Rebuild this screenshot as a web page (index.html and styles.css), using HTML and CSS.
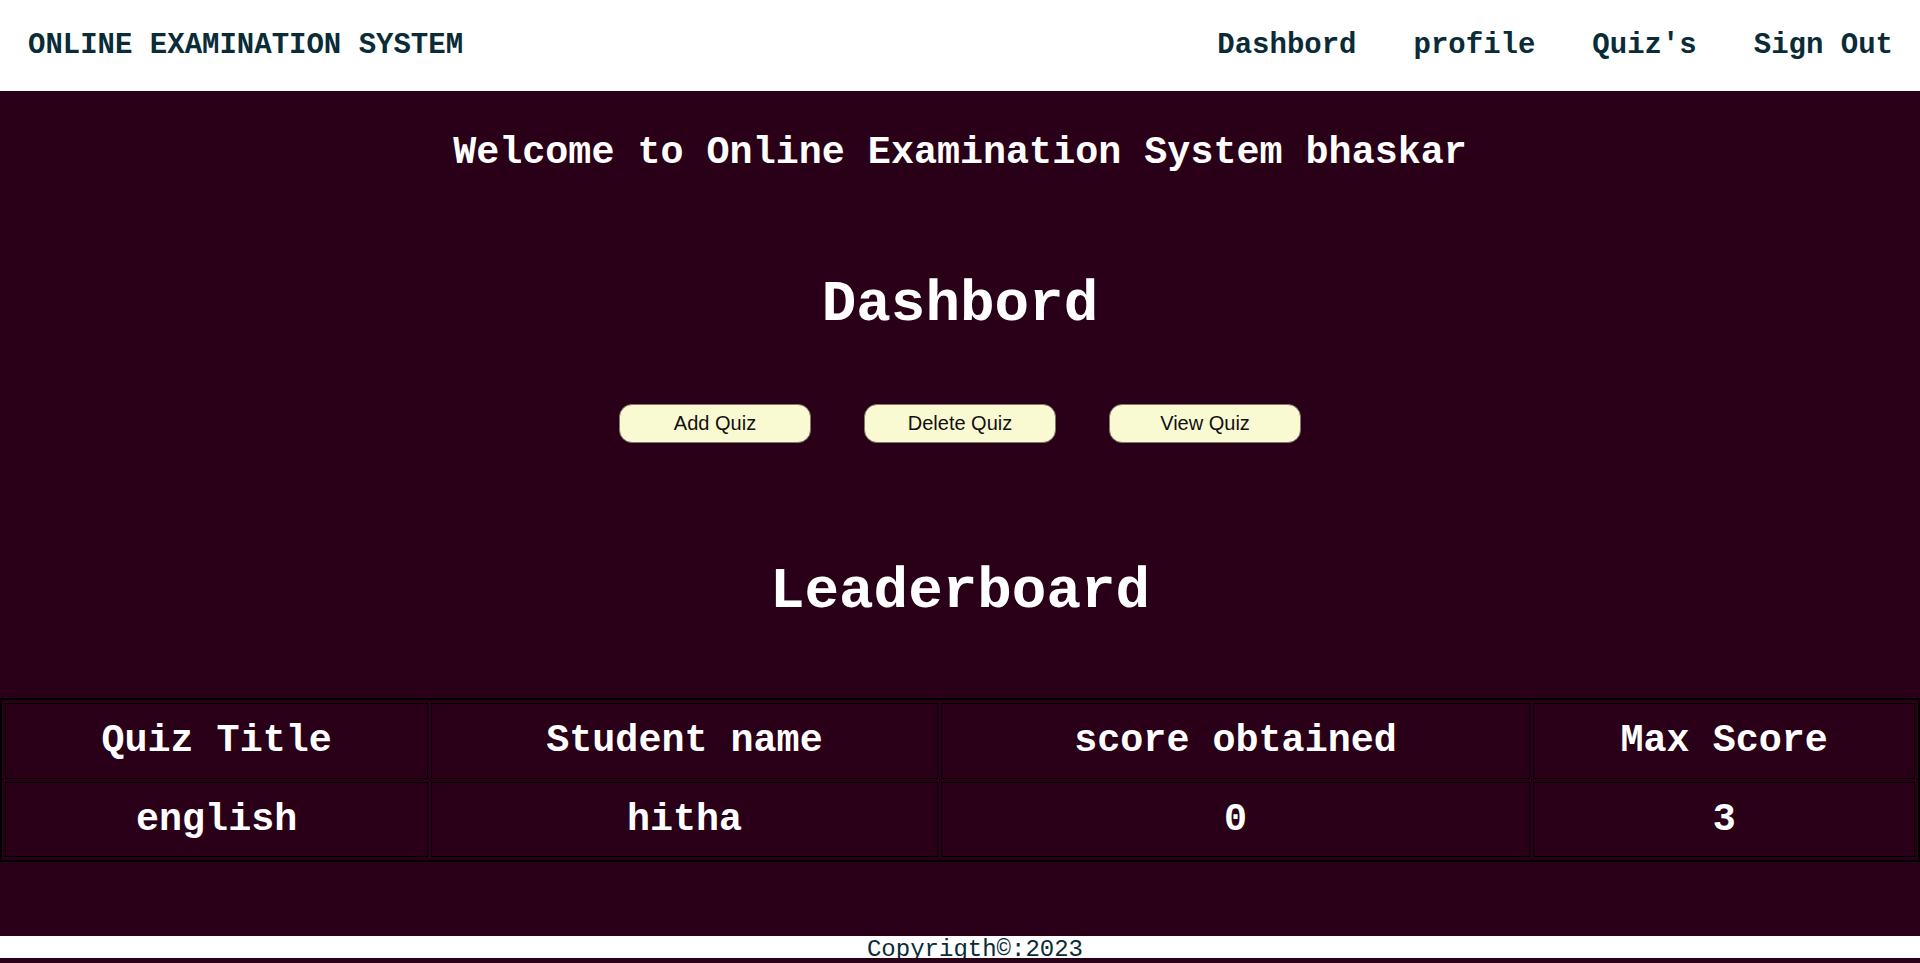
FILE: index.html
```html
<!DOCTYPE html>
<html lang="en">
<head>
<meta charset="utf-8">
<title>Online Examination System</title>
<link rel="stylesheet" href="styles.css">
</head>
<body>
<header class="topbar">
  <div class="brand">ONLINE EXAMINATION SYSTEM</div>
  <nav class="nav">
    <a class="nav-link" href="#">Dashbord</a>
    <a class="nav-link" href="#">profile</a>
    <a class="nav-link" href="#">Quiz's</a>
    <a class="nav-link" href="#">Sign Out</a>
  </nav>
</header>
<main class="content">
  <h2 class="welcome">Welcome to Online Examination System bhaskar</h2>
  <h1 class="section-title dash-title">Dashbord</h1>
  <div class="actions">
    <button class="action-btn" type="button">Add Quiz</button>
    <button class="action-btn" type="button">Delete Quiz</button>
    <button class="action-btn" type="button">View Quiz</button>
  </div>
  <h1 class="section-title leader-title">Leaderboard</h1>
  <table class="board">
    <thead>
      <tr>
        <th>Quiz Title</th>
        <th>Student name</th>
        <th>score obtained</th>
        <th>Max Score</th>
      </tr>
    </thead>
    <tbody>
      <tr>
        <td>english</td>
        <td>hitha</td>
        <td>0</td>
        <td>3</td>
      </tr>
    </tbody>
  </table>
</main>
<footer class="footer">Copyrigth©:2023</footer>
</body>
</html>
```
FILE: styles.css
```css
html, body {
  margin: 0;
  padding: 0;
}

body {
  background: #2a0019;
  font-family: "Liberation Mono", "Courier New", monospace;
  display: flex;
  flex-direction: column;
}

.topbar {
  height: 91px;
  background: #ffffff;
  display: flex;
  align-items: center;
  justify-content: space-between;
  padding: 0 27px 0 28px;
  color: #0a2c37;
  font-weight: bold;
  font-size: 29px;
}

.brand {
  white-space: nowrap;
}

.nav {
  display: flex;
  gap: 57px;
}

.nav-link {
  color: #0a2c37;
  text-decoration: none;
  white-space: nowrap;
}

.content {
  display: flex;
  flex-direction: column;
  align-items: center;
  color: #ffffff;
}

.welcome {
  margin: 41px 0 0;
  font-size: 38.4px;
  line-height: 43.5px;
  font-weight: bold;
  text-align: center;
}

.section-title {
  margin: 0;
  font-size: 57.6px;
  line-height: 65.3px;
  font-weight: bold;
  text-align: center;
}

.dash-title {
  margin-top: 96px;
}

.actions {
  margin-top: 67px;
  display: flex;
  gap: 53px;
}

.action-btn {
  width: 192px;
  height: 39px;
  padding: 0;
  background: #fafad2;
  border: 1px solid #857570;
  border-radius: 13px;
  font-family: "Liberation Sans", Arial, sans-serif;
  font-size: 20px;
  color: #111111;
}

.leader-title {
  margin-top: 116px;
}

.board {
  margin-top: 74px;
  width: 100%;
  border: 2px solid #000000;
  border-spacing: 3px;
  color: #ffffff;
  font-size: 38.4px;
  font-weight: bold;
}

.board th,
.board td {
  border: 1px solid #000000;
  padding: 16px 1px 14px;
  line-height: 43.5px;
  text-align: center;
  font-weight: bold;
}

.footer {
  margin-top: 74px;
  height: 21.5px;
  padding-left: 30px;
  background: #ffffff;
  color: #0a2c37;
  text-align: center;
  font-size: 24px;
  line-height: 27px;
  white-space: nowrap;
}
```
